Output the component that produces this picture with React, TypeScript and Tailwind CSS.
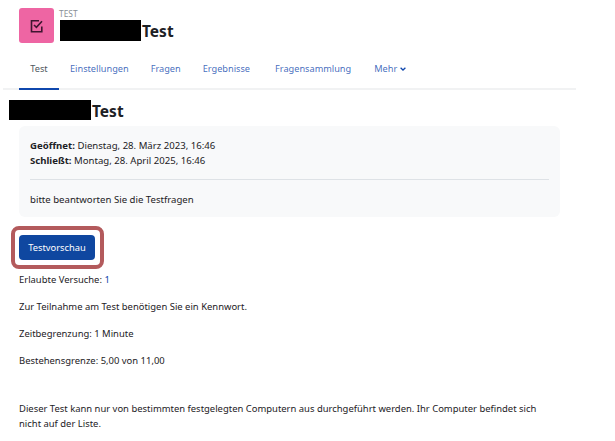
import React from 'react';

const tabs = ['Test', 'Einstellungen', 'Fragen', 'Ergebnisse', 'Fragensammlung'];
const font = { fontFamily: '"Noto Sans", sans-serif' };

export default function App() {
  return (
    <div className="w-[615px] h-[441px] overflow-hidden bg-white text-[9.45px] leading-[14px] text-[#1d2125]" style={font}>
      {/* Page header */}
      <div className="flex items-start pl-[19px] pt-[8px] h-[60px]">
        <div className="w-[35px] h-[35px] rounded-[3px] bg-[#ee65a3] flex items-center justify-center">
          <svg width="14" height="14" viewBox="0 0 14 14" fill="none" stroke="#3f1530" strokeWidth="1.6">
            <path d="M11.8 7.5V12.7H1.5V1.8H9" />
            <path d="M4 6l2.4 2.4L12 2.2" />
          </svg>
        </div>
        <div className="ml-[5px] flex flex-col">
          <span className="text-[8.4px] leading-[10px] pt-[1px] text-[#8a9096]">TEST</span>
          <div className="flex items-center h-[21px] mt-[1px] text-[15.5px] font-bold ml-[1px]">
            <span className="inline-block w-[81px] h-[21px] bg-black" />
            <span className="ml-[1px]">Test</span>
          </div>
        </div>
      </div>

      {/* Tabs */}
      <div className="ml-[3px] w-[573px] h-[30px] border-b-2 border-[#f1f2f3] flex pl-[16px] text-[9.2px]">
        {tabs.map((t, i) => (
          <div
            key={t}
            className={
              i === 0
                ? 'w-[40px] h-[30px] pt-[2px] text-center text-[#4f5760] border-b-2 border-[#0f47ad]'
                : i === 3
                  ? 'ml-[11px] mr-[14px] h-[28px] pt-[2px] text-[#0f47ad]/80'
                  : 'ml-[11px] mr-[11px] h-[28px] pt-[2px] text-[#0f47ad]/80'
            }
          >
            {t}
          </div>
        ))}
        <div className="h-[28px] ml-[12px] pt-[2px] flex items-start text-[#0f47ad]/80">
          Mehr
          <svg className="ml-[3px] mt-[5px]" width="6" height="4" viewBox="0 0 6 4" fill="none" stroke="#0f47ad" strokeWidth="1.3">
            <path d="M.6.8 3 3 5.4.8" />
          </svg>
        </div>
      </div>

      {/* Heading */}
      <div className="flex items-center h-[20px] mt-[10px] ml-[9px] text-[15.5px] font-bold">
        <span className="inline-block w-[82px] h-[20px] bg-black" />
        <span className="ml-[1px] mt-[1px]">Test</span>
      </div>

      {/* Activity dates */}
      <div className="mt-[6px] ml-[19px] w-[541px] h-[91px] bg-[#f8f9fa] rounded-[6px] px-[11px] pt-[12px] text-[9.6px]">
        <div className="leading-[15px]">
          <b>Geöffnet:</b> Dienstag, 28. März 2023, 16:46
        </div>
        <div className="leading-[15px]">
          <b>Schließt:</b> Montag, 28. April 2025, 16:46
        </div>
        <div className="h-px bg-[#dee2e6] mt-[11px] mb-[13px]" />
        <div>bitte beantworten Sie die Testfragen</div>
      </div>

      {/* Preview button, circled in the picture */}
      <div className="mt-[9px] ml-[11px] w-[93px] h-[43px] border-[4px] border-[#b35a5c] rounded-[8px] flex items-center pl-[4px]">
        <button className="w-[76px] h-[25px] rounded-[4px] bg-[#0f47a0] text-white text-[9.3px]">Testvorschau</button>
      </div>

      {/* Access rules */}
      <div className="ml-[19px] mt-[4px] w-[530px]">
        <div>Erlaubte Versuche: <span className="text-[#0f47ad]">1</span></div>
        <div className="mt-[13px]">Zur Teilnahme am Test benötigen Sie ein Kennwort.</div>
        <div className="mt-[13px]">Zeitbegrenzung: 1 Minute</div>
        <div className="mt-[13px]">Bestehensgrenze: 5,00 von 11,00</div>
        <div className="mt-[33px] leading-[15px]">
          Dieser Test kann nur von bestimmten festgelegten Computern aus durchgeführt werden. Ihr Computer befindet sich nicht auf der Liste.
        </div>
      </div>
    </div>
  );
}
